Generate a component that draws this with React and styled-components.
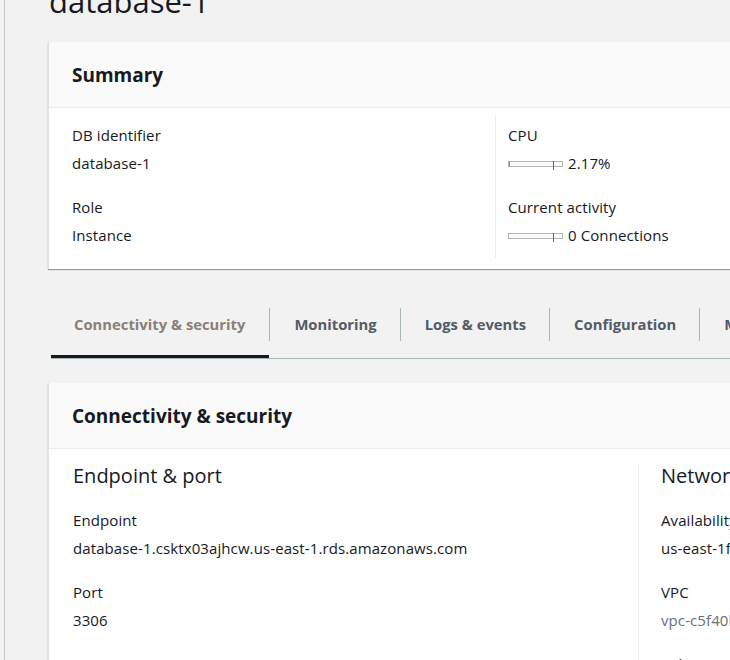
import React from "react";
import styled, { createGlobalStyle } from "styled-components";

const Global = createGlobalStyle`
  html, body { margin: 0; padding: 0; }
  body {
    background: #f2f2f2;
    font-family: "Open Sans", "Noto Sans", sans-serif;
    color: #16191f;
    overflow: hidden;
    width: 730px;
    height: 660px;
  }
  * { box-sizing: border-box; }
`;

const Shell = styled.div`
  margin-left: 4px;
  border-left: 1px solid #c9c9c9;
  min-height: 660px;
  padding-left: 43px;
`;

const Content = styled.div`
  width: 1100px;
`;

const Title = styled.h1`
  margin: -17px 0 23px 1px;
  font-size: 31px;
  line-height: 36px;
  font-weight: 400;
  color: #16191f;
`;

const Card = styled.section`
  background: #fff;
  border-left: 1px solid #e1e1e1;
  box-shadow: 0 1px 1px 0 rgba(60, 40, 30, 0.45);
`;

const CardHeader = styled.header`
  height: 66px;
  display: flex;
  align-items: center;
  padding-left: 23px;
  background: #fafafa;
  border-bottom: 1px solid #eaeded;
  font-size: 19px;
  font-weight: 700;
`;

const CardBody = styled.div`
  display: grid;
  grid-template-columns: ${(p) => p.$cols};
  padding: ${(p) => p.$pad};
`;

const Column = styled.div`
  padding: ${(p) => p.$pad};
  ${(p) => (p.$divider ? "border-left: 1px solid #eaeded;" : "")}
`;

const SubHeading = styled.h3`
  margin: 0 0 20px;
  font-size: 20px;
  line-height: 26px;
  font-weight: 400;
  white-space: nowrap;
`;

const Field = styled.div`
  & + & { margin-top: 22px; }
`;

const Label = styled.div`
  font-size: 15px;
  line-height: 22px;
  letter-spacing: 0.1px;
  margin-bottom: 6px;
  white-space: nowrap;
`;

const Value = styled.div`
  font-size: 15px;
  line-height: 22px;
  letter-spacing: 0.1px;
  white-space: nowrap;
  color: ${(p) => (p.$muted ? "#687078" : "#16191f")};
  display: flex;
  align-items: center;
`;

const Meter = styled.span`
  position: relative;
  display: inline-block;
  width: 55px;
  height: 6px;
  border: 1px solid #b9b3ae;
  background: #fbfbfb;
  margin-right: 5px;
  margin-top: 2px;
`;

const MeterFill = styled.span`
  display: block;
  height: 100%;
  background: #8a837e;
`;

const MeterTick = styled.span`
  position: absolute;
  left: 44px;
  top: -1px;
  width: 1px;
  height: 9px;
  background: #6b625c;
`;

const TabList = styled.nav`
  display: flex;
  margin: 0 0 24px 3px;
  border-bottom: 1px solid #aab7b8;
`;

const Tab = styled.div`
  padding-bottom: 17px;
  box-shadow: ${(p) => (p.$active ? "inset 0 -3px 0 #16191f" : "none")};
`;

const TabLabel = styled.span`
  display: block;
  height: 33px;
  line-height: 33px;
  padding: 0 ${(p) => (p.$first ? 24 : 23)}px 0 ${(p) => (p.$first ? 23 : 24)}px;
  border-left: ${(p) => (p.$first ? "none" : "1px solid #aab7b8")};
  font-size: 14.8px;
  font-weight: 700;
  white-space: nowrap;
  color: ${(p) => (p.$active ? "#8a7f76" : "#545b64")};
`;

const TabSpacer = styled.div`
  height: 39px;
`;

function Bar({ pct }) {
  return (
    <Meter>
      <MeterFill style={{ width: `${pct}%` }} />
      <MeterTick />
    </Meter>
  );
}

const tabs = ["Connectivity & security", "Monitoring", "Logs & events", "Configuration", "Maintenance & backups", "Tags"];

export default function App() {
  return (
    <>
      <Global />
      <Shell>
        <Content>
          <Title>database-1</Title>
          <Card>
            <CardHeader>Summary</CardHeader>
            <CardBody $cols="423px 423px 1fr" $pad="7px 0 11px 23px">
              <Column $pad="9px 0 12px">
                <Field>
                  <Label>DB identifier</Label>
                  <Value>database-1</Value>
                </Field>
                <Field>
                  <Label>Role</Label>
                  <Value>Instance</Value>
                </Field>
              </Column>
              <Column $divider $pad="9px 0 12px 12px">
                <Field>
                  <Label>CPU</Label>
                  <Value><Bar pct={2.17} />2.17%</Value>
                </Field>
                <Field>
                  <Label>Current activity</Label>
                  <Value><Bar pct={0} />0 Connections</Value>
                </Field>
              </Column>
              <Column $divider $pad="9px 0 12px 12px">
                <Field>
                  <Label>Status</Label>
                  <Value>Available</Value>
                </Field>
                <Field>
                  <Label>Engine</Label>
                  <Value>MySQL Community</Value>
                </Field>
              </Column>
            </CardBody>
          </Card>
          <TabSpacer />
          <TabList>
            {tabs.map((t, i) => (
              <Tab key={t} $active={i === 0}>
                <TabLabel $first={i === 0} $active={i === 0}>{t}</TabLabel>
              </Tab>
            ))}
          </TabList>
          <Card>
            <CardHeader>Connectivity &amp; security</CardHeader>
            <CardBody $cols="565px 565px 1fr" $pad="14px 0 20px 24px">
              <Column $pad="0">
                <SubHeading>Endpoint &amp; port</SubHeading>
                <Field>
                  <Label>Endpoint</Label>
                  <Value>database-1.csktx03ajhcw.us-east-1.rds.amazonaws.com</Value>
                </Field>
                <Field>
                  <Label>Port</Label>
                  <Value>3306</Value>
                </Field>
              </Column>
              <Column $divider $pad="0 0 0 22px">
                <SubHeading>Networking</SubHeading>
                <Field>
                  <Label>Availability zone</Label>
                  <Value>us-east-1f</Value>
                </Field>
                <Field>
                  <Label>VPC</Label>
                  <Value $muted>vpc-c5f40bbf</Value>
                </Field>
                <Field>
                  <Label>Subnet group</Label>
                  <Value>default</Value>
                </Field>
              </Column>
              <Column $divider $pad="0 0 0 22px">
                <SubHeading>Security</SubHeading>
              </Column>
            </CardBody>
          </Card>
        </Content>
      </Shell>
    </>
  );
}
